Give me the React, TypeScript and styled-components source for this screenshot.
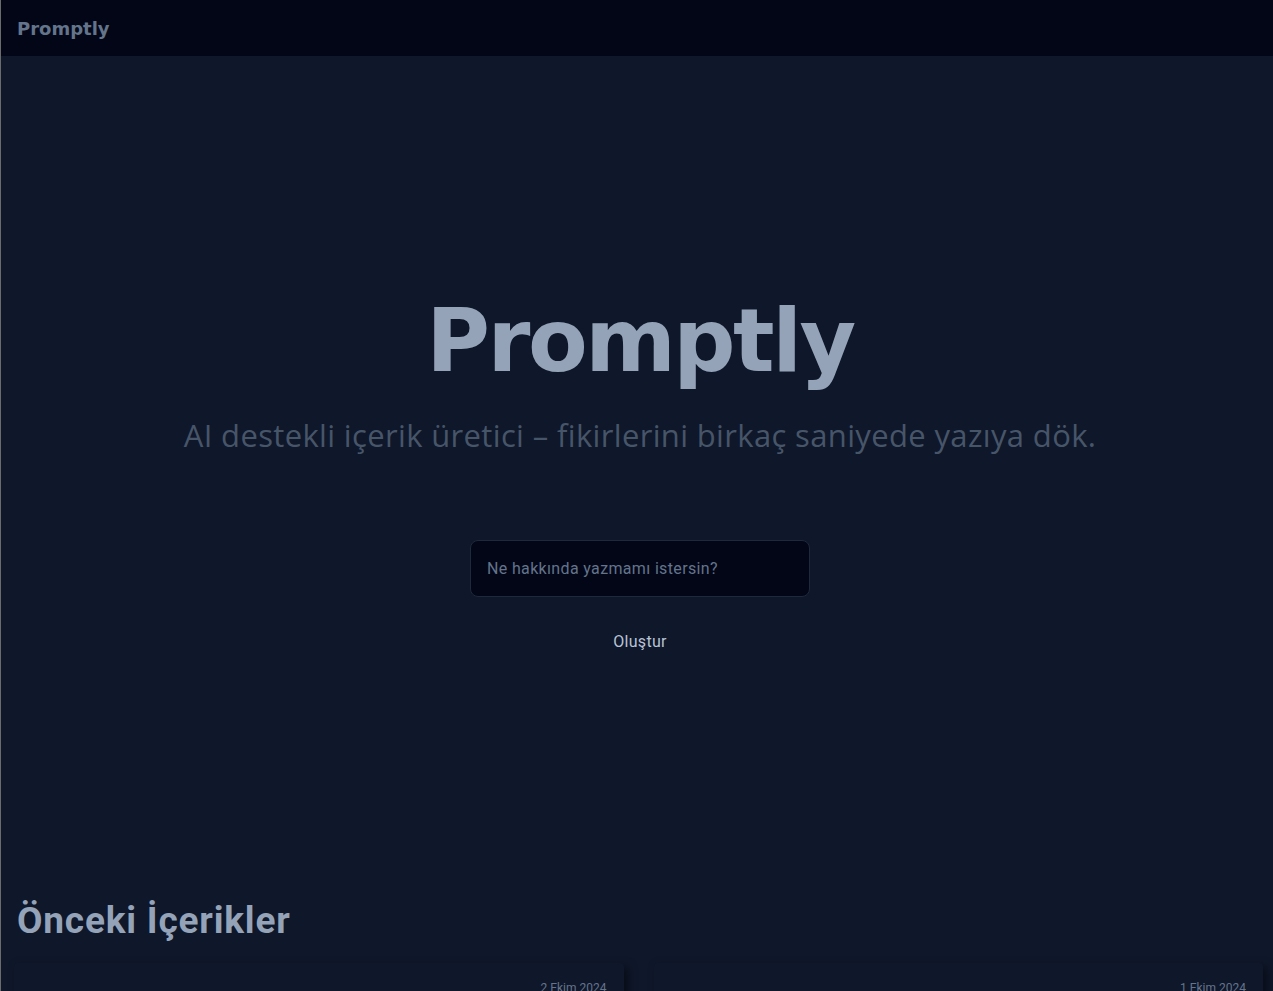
import React from "react";
import styled, { createGlobalStyle } from "styled-components";

const Global = createGlobalStyle`
  html, body { margin: 0; padding: 0; background: #0f172a; }
  body { border-left: 1px solid #6b6b6b; min-height: 100vh; box-sizing: border-box; overflow: hidden; }
  * { box-sizing: border-box; }
`;

const Page = styled.div`
  min-height: 100vh;
  background: #0f172a;
  font-family: "Roboto", "Liberation Sans", sans-serif;
`;

const NavBar = styled.header`
  height: 56px;
  background: #020617;
  display: flex;
  align-items: center;
  padding: 0 16px;
`;

const Brand = styled.div`
  font-family: "DejaVu Sans", sans-serif;
  font-weight: 700;
  font-size: 18px;
  color: #64748b;
`;

const Hero = styled.section`
  height: 843px;
  display: flex;
  flex-direction: column;
  align-items: center;
  padding: 242px 0 0 6px;
`;

const Title = styled.h1`
  margin: 0;
  font-family: "DejaVu Sans", sans-serif;
  font-weight: 700;
  font-size: 87px;
  letter-spacing: -2.5px;
  line-height: 1;
  color: #94a3b8;
`;

const Subtitle = styled.p`
  margin: 30px 0 0;
  font-family: "Open Sans", sans-serif;
  font-weight: 400;
  font-size: 31px;
  letter-spacing: 0.35px;
  line-height: 40px;
  color: #475569;
`;

const PromptInput = styled.input`
  margin-top: 85px;
  width: 340px;
  height: 57px;
  background: #020617;
  border: 1px solid #1e293b;
  border-radius: 8px;
  padding: 0 16px;
  font-family: "Roboto", sans-serif;
  font-size: 16px;
  letter-spacing: 0.35px;
  color: #cbd5e1;
  outline: none;
  &::placeholder { color: #64748b; }
`;

const CreateButton = styled.button`
  margin-top: 35px;
  background: transparent;
  border: none;
  font-family: "Roboto", sans-serif;
  font-size: 16px;
  letter-spacing: 0.3px;
  line-height: 19px;
  color: #b8c4d6;
  padding: 0;
  cursor: pointer;
`;

const History = styled.section`
  padding: 0 10px 0 13px;
`;

const HistoryTitle = styled.h2`
  margin: 0 0 21px 3px;
  font-family: "Roboto", sans-serif;
  font-weight: 700;
  font-size: 37px;
  letter-spacing: 0.8px;
  color: #94a3b8;
`;

const Grid = styled.div`
  display: grid;
  grid-template-columns: 1fr 1fr;
  gap: 30px;
`;

const Card = styled.article`
  background: #0f172a;
  border-radius: 4px;
  box-shadow: 4px 4px 10px rgba(0, 0, 0, 0.5);
  padding: 18px 17px 24px;
  min-height: 160px;
`;

const CardDate = styled.div`
  text-align: right;
  font-family: "Roboto", sans-serif;
  font-size: 12px;
  color: #64748b;
`;

export default function App() {
  return (
    <Page>
      <Global />
      <NavBar>
        <Brand>Promptly</Brand>
      </NavBar>
      <Hero>
        <Title>Promptly</Title>
        <Subtitle>AI destekli içerik üretici – fikirlerini birkaç saniyede yazıya dök.</Subtitle>
        <PromptInput placeholder="Ne hakkında yazmamı istersin?" />
        <CreateButton>Oluştur</CreateButton>
      </Hero>
      <History>
        <HistoryTitle>Önceki İçerikler</HistoryTitle>
        <Grid>
          <Card>
            <CardDate>2 Ekim 2024</CardDate>
          </Card>
          <Card>
            <CardDate>1 Ekim 2024</CardDate>
          </Card>
        </Grid>
      </History>
    </Page>
  );
}
